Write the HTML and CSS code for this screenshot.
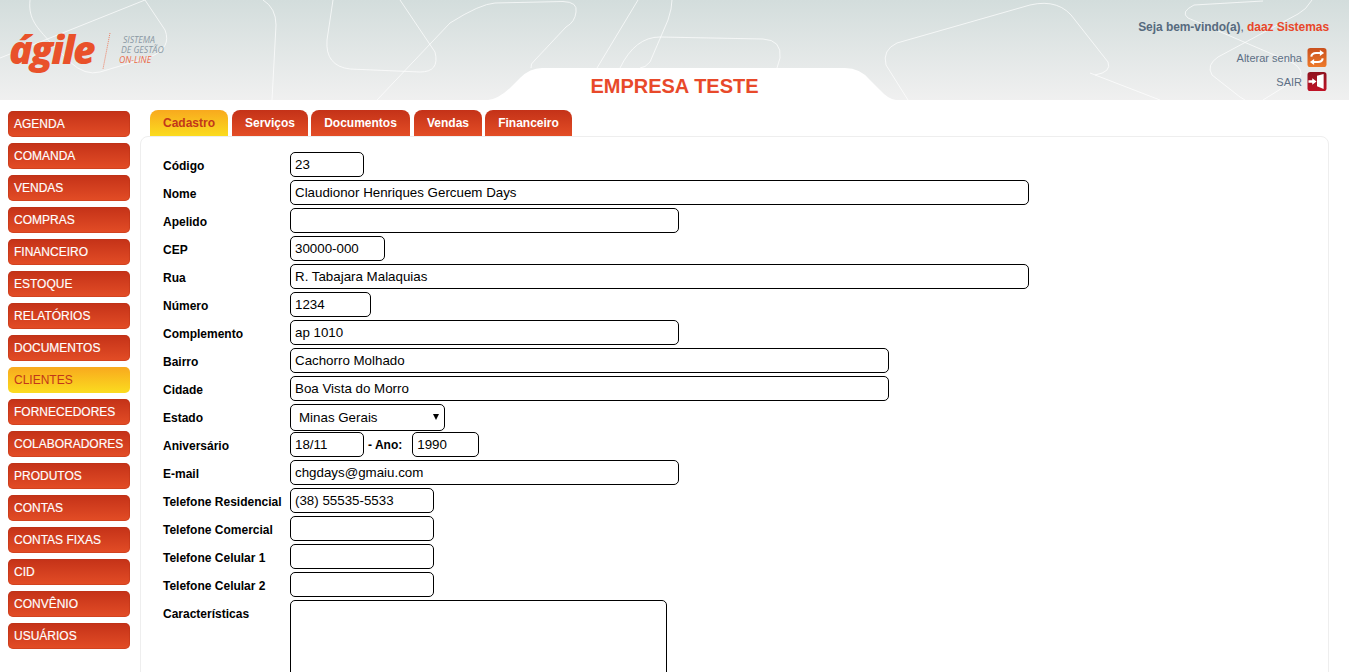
FILE: index.html
```html
<!DOCTYPE html>
<html lang="pt-BR">
<head>
<meta charset="utf-8">
<title>Ágile - Sistema de Gestão On-line</title>
<link rel="stylesheet" href="styles.css">
</head>
<body>
<header class="header">
  <svg class="decor" width="1349" height="100" viewBox="0 0 1349 100" aria-hidden="true">
    <g class="decor-lines">
      <path d="M30 0C28 20 38 28 50 42L70 62Q85 76 100 72L150 57Q172 48 165 30L145 0"/>
      <path d="M0 58L145 0"/>
      <path d="M263 0Q276 8 276 25L272 100"/>
      <path d="M333 0L327 40Q325 66 350 69L420 72Q440 72 435 52L400 0"/>
      <path d="M377 100L450 23Q480 4 495 3L563 1.5Q578 2 576 12Q575 22 566 27L535 60Q530 64 531 68"/>
      <path d="M638 0L597 68"/>
      <path d="M620 68Q635 37 660 37L763 39Q782 40 780 58L777 68"/>
      <path d="M672 0Q672 8 668 20L650 62Q645 68 640 68"/>
      <path d="M908 100L886 65Q882 50 897 43L1030 5Q1060 -2 1075 20L1108 62Q1112 72 1095 75"/>
      <path d="M1090 73L1160 100"/>
      <path d="M1263 1L1194 5Q1180 12 1188 18L1293 63Q1304 70 1300 77L1263 100"/>
      <path d="M1312 0Q1306 10 1298 14L1218 57Q1206 65 1212 75L1240 97L1245 100"/>
    </g>
    <path class="decor-notch" d="M488 100Q498 99 510 88L520 78Q530 68 542 68L845 68Q860 68 870 80L880 90Q888 99 896 100Z"/>
  </svg>
  <a class="logo" href="#">
    <span class="logo-word">ágile</span>
    <svg class="logo-rule" width="10" height="38" viewBox="0 0 10 38" aria-hidden="true"><path d="M8 1L1 37"/></svg>
    <span class="logo-tag">
      <span class="tag-a">SISTEMA</span>
      <span class="tag-b">DE GESTÃO</span>
      <span class="tag-c">ON-LINE</span>
    </span>
  </a>
  <h1 class="company">EMPRESA TESTE</h1>
  <div class="user">
    <p class="welcome">Seja bem-vindo(a)<span class="welcome-comma">,</span> <span class="welcome-name">daaz Sistemas</span></p>
    <a class="user-link" href="#">Alterar senha
      <svg class="user-icon" width="20" height="20" viewBox="0 0 20 20" aria-hidden="true">
        <defs><linearGradient id="og" x1="0" y1="0" x2="0" y2="1"><stop offset="0" stop-color="#c9501d"/><stop offset="1" stop-color="#ee7a2a"/></linearGradient></defs>
        <rect width="20" height="20" rx="3" fill="url(#og)"/>
        <path d="M4 9Q4.500 5.200 9 5.200H13.500" class="ic-stroke"/><path d="M13 2L17.500 5.200L13 8.300Z" fill="#fff"/>
        <path d="M16 11Q15.500 14.800 11 14.800H6.500" class="ic-stroke"/><path d="M7 11.700L2.500 14.800L7 18Z" fill="#fff"/>
      </svg>
    </a>
    <a class="user-link" href="#">SAIR
      <svg class="user-icon" width="20" height="20" viewBox="0 0 20 20" aria-hidden="true">
        <defs><linearGradient id="rg" x1="0" y1="0" x2="0" y2="1"><stop offset="0" stop-color="#8f1420"/><stop offset="1" stop-color="#c01226"/></linearGradient></defs>
        <rect width="20" height="20" rx="3" fill="url(#rg)"/>
        <path d="M10 4L17 2V18L10 15Z" fill="#fff"/>
        <path d="M1 8.800H5V6.500L9.500 10L5 13.500V11.200H1Z" fill="#fff"/>
      </svg>
    </a>
  </div>
</header>

<div class="layout">
  <nav class="side">
    <a class="side-item" href="#">AGENDA</a>
    <a class="side-item" href="#">COMANDA</a>
    <a class="side-item" href="#">VENDAS</a>
    <a class="side-item" href="#">COMPRAS</a>
    <a class="side-item" href="#">FINANCEIRO</a>
    <a class="side-item" href="#">ESTOQUE</a>
    <a class="side-item" href="#">RELATÓRIOS</a>
    <a class="side-item" href="#">DOCUMENTOS</a>
    <a class="side-item is-active" href="#">CLIENTES</a>
    <a class="side-item" href="#">FORNECEDORES</a>
    <a class="side-item" href="#">COLABORADORES</a>
    <a class="side-item" href="#">PRODUTOS</a>
    <a class="side-item" href="#">CONTAS</a>
    <a class="side-item" href="#">CONTAS FIXAS</a>
    <a class="side-item" href="#">CID</a>
    <a class="side-item" href="#">CONVÊNIO</a>
    <a class="side-item" href="#">USUÁRIOS</a>
  </nav>
  <main class="main">
    <div class="tabs">
      <a class="tab tab-cadastro is-active" href="#">Cadastro</a>
      <a class="tab tab-servicos" href="#">Serviços</a>
      <a class="tab tab-documentos" href="#">Documentos</a>
      <a class="tab tab-vendas" href="#">Vendas</a>
      <a class="tab tab-financeiro" href="#">Financeiro</a>
    </div>
    <form class="panel">
      <div class="row"><label class="lbl">Código</label><input class="fld w-74" value="23"></div>
      <div class="row"><label class="lbl">Nome</label><input class="fld w-739" value="Claudionor Henriques Gercuem Days"></div>
      <div class="row"><label class="lbl">Apelido</label><input class="fld w-389" value=""></div>
      <div class="row"><label class="lbl">CEP</label><input class="fld w-95" value="30000-000"></div>
      <div class="row"><label class="lbl">Rua</label><input class="fld w-739" value="R. Tabajara Malaquias"></div>
      <div class="row"><label class="lbl">Número</label><input class="fld w-81" value="1234"></div>
      <div class="row"><label class="lbl">Complemento</label><input class="fld w-389" value="ap 1010"></div>
      <div class="row"><label class="lbl">Bairro</label><input class="fld w-599" value="Cachorro Molhado"></div>
      <div class="row"><label class="lbl">Cidade</label><input class="fld w-599" value="Boa Vista do Morro"></div>
      <div class="row"><label class="lbl">Estado</label>
        <span class="select-wrap"><select class="sel"><option>Minas Gerais</option></select></span>
      </div>
      <div class="row"><label class="lbl">Aniversário</label><input class="fld w-74" value="18/11"><span class="inline-lbl">- Ano:</span><input class="fld w-67" value="1990"></div>
      <div class="row"><label class="lbl">E-mail</label><input class="fld w-389" value="chgdays@gmaiu.com"></div>
      <div class="row"><label class="lbl">Telefone Residencial</label><input class="fld w-144" value="(38) 55535-5533"></div>
      <div class="row"><label class="lbl">Telefone Comercial</label><input class="fld w-144" value=""></div>
      <div class="row"><label class="lbl">Telefone Celular 1</label><input class="fld w-144" value=""></div>
      <div class="row"><label class="lbl">Telefone Celular 2</label><input class="fld w-144" value=""></div>
      <div class="row row-area"><label class="lbl">Características</label><textarea class="area"></textarea></div>
    </form>
  </main>
</div>
</body>
</html>
```
FILE: styles.css
```css
* { box-sizing: border-box; }
html, body { height: 100%; overflow: hidden; }
body {
  margin: 0;
  background: #fff;
  color: #000;
  font-family: "Liberation Sans", Arial, sans-serif;
  font-size: 12px;
}
a { text-decoration: none; }

.header {
  position: relative;
  height: 100px;
  display: grid;
  grid-template-columns: 1fr auto 1fr;
  padding: 0 20px;
  background: linear-gradient(#d3dddc, #f0f0f0);
  overflow: hidden;
}
.decor { position: absolute; left: 0; top: 0; }
.decor-lines path { fill: none; stroke: #fff; stroke-width: 1; opacity: .7; }
.decor-notch { fill: #fff; }

.logo {
  position: relative;
  display: flex;
  align-items: flex-start;
  margin-left: -11px;
  padding-top: 25px;
}
.logo-word {
  font-family: "Open Sans", sans-serif;
  font-weight: 800;
  font-style: italic;
  font-size: 39px;
  line-height: 48px;
  letter-spacing: -1.8px;
  color: #e9512a;
}
.logo-rule { margin: 7px 0 0 8px; }
.logo-rule path { fill: none; stroke: #ee7f63; stroke-width: 1; stroke-dasharray: 1 1; }
.logo-tag {
  display: flex;
  flex-direction: column;
  margin: 10px 0 0 8px;
  font-family: "Open Sans", sans-serif;
  font-style: italic;
  font-size: 8.7px;
  line-height: 10px;
  color: #8a98a3;
  white-space: nowrap;
}
.tag-a { padding-left: 3px; }
.tag-b { padding-left: 1px; }
.tag-c { margin-left: -1px; color: #ea6a48; }

.company {
  position: relative;
  margin: 74px 0 0;
  font-size: 20px;
  line-height: 24px;
  font-weight: 700;
  color: #e8492a;
}

.user {
  position: relative;
  display: flex;
  flex-direction: column;
  align-items: flex-end;
  padding-top: 20px;
}
.welcome {
  margin: 0 0 14px;
  font-weight: 700;
  font-size: 12px;
  line-height: 14px;
  letter-spacing: -.06px;
  color: #566a7e;
}
.welcome-comma { font-weight: 400; }
.welcome-name { color: #e8472a; }
.user-link {
  display: flex;
  align-items: center;
  gap: 5px;
  height: 19px;
  margin: 0 2px 5px 0;
  font-size: 11px;
  color: #5d6f85;
}
.user-icon { width: 20px; height: 19px; }
.ic-stroke { fill: none; stroke: #fff; stroke-width: 2.2; }

.layout { display: flex; padding-left: 8px; }
.side {
  width: 122px;
  flex: none;
  display: flex;
  flex-direction: column;
  gap: 6px;
  padding-top: 11px;
}
.side-item {
  display: block;
  height: 26px;
  line-height: 27px;
  padding-left: 6px;
  border-radius: 5px;
  background: linear-gradient(#c43218, #e34d26);
  box-shadow: inset 0 0 0 1px rgba(180, 50, 20, .35);
  color: #fff;
  font-size: 12px;
  -webkit-text-stroke: .15px currentColor;
}
.side-item.is-active {
  background: linear-gradient(#f8a91e, #fbdc1f);
  box-shadow: none;
  color: #c2371a;
  -webkit-text-stroke: 0;
}

.main { margin-left: 10px; width: 1189px; }
.tabs {
  display: flex;
  padding: 10px 0 0 10px;
  height: 36px;
}
.tab {
  height: 26px;
  line-height: 27px;
  text-align: center;
  border-radius: 8px 8px 0 0;
  background: linear-gradient(#c43218, #e34d26);
  color: #fff;
  font-weight: 700;
  font-size: 12px;
}
.tab.is-active { background: linear-gradient(#f8a91e, #fbdc1f); color: #c2371a; }
.tab-cadastro { width: 78px; margin-right: 4px; }
.tab-servicos { width: 76px; margin-right: 3px; }
.tab-documentos { width: 99px; margin-right: 4px; }
.tab-vendas { width: 68px; margin-right: 3px; }
.tab-financeiro { width: 87px; }

.panel {
  display: flex;
  flex-direction: column;
  gap: 3px;
  height: 700px;
  padding: 15px 0 0 22px;
  border: 1px solid #eee;
  border-radius: 8px 8px 0 0;
}
.row { display: flex; align-items: center; height: 25px; }
.row-area { align-items: flex-start; height: auto; }
.lbl {
  width: 127px;
  flex: none;
  padding-top: 2px;
  font-weight: 700;
  font-size: 12px;
  line-height: 14px;
}
.row-area .lbl { padding-top: 7px; }
.inline-lbl { margin: 0 10px 0 4px; font-weight: 700; }

.fld, .sel, .area {
  border: 1px solid #000;
  border-radius: 5px;
  background: #fff;
  color: #000;
  font-family: "Liberation Sans", Arial, sans-serif;
  font-size: 13.33px;
  outline: none;
}
.fld { height: 25px; padding: 0 4px; }
.w-67 { width: 67px; }
.w-74 { width: 74px; }
.w-81 { width: 81px; }
.w-95 { width: 95px; }
.w-144 { width: 144px; }
.w-389 { width: 389px; }
.w-599 { width: 599px; }
.w-739 { width: 739px; }

.select-wrap { position: relative; display: block; width: 155px; height: 27px; margin-top: 2px; }
.sel {
  appearance: none;
  -webkit-appearance: none;
  display: block;
  width: 155px;
  height: 27px;
  padding: 0 4px 0 8px;
}
.select-wrap::after {
  content: "";
  position: absolute;
  right: 6px;
  top: 10px;
  border-left: 3.5px solid transparent;
  border-right: 3.5px solid transparent;
  border-top: 6px solid #000;
  pointer-events: none;
}
.area { width: 377px; height: 130px; padding: 2px 4px; resize: none; }
```
